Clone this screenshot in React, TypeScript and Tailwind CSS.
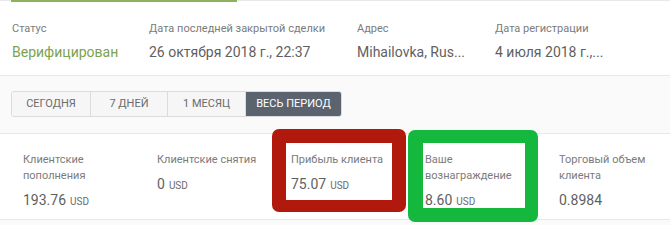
const info = [
  { label: 'Статус', value: 'Верифицирован', w: 'w-[137px]', green: true },
  { label: 'Дата последней закрытой сделки', value: '26 октября 2018 г., 22:37', w: 'w-[208px]' },
  { label: 'Адрес', value: 'Mihailovka, Rus...', w: 'w-[138px]' },
  { label: 'Дата регистрации', value: '4 июля 2018 г.,...', w: 'w-[130px]' },
];

const periods = [
  { label: 'Сегодня', w: 'w-[78px]' },
  { label: '7 дней', w: 'w-[77px]' },
  { label: '1 месяц', w: 'w-[78px]' },
  { label: 'Весь период', w: 'w-[96px]', active: true },
];

const stats = [
  { label: ['Клиентские', 'пополнения'], value: '193.76', unit: 'USD' },
  { label: ['Клиентские снятия'], value: '0', unit: 'USD' },
  { label: ['Прибыль клиента'], value: '75.07', unit: 'USD' },
  { label: ['Ваше', 'вознаграждение'], value: '8.60', unit: 'USD' },
  { label: ['Торговый объем', 'клиента'], value: '0.8984' },
];

export default function App() {
  return (
    <div className="relative h-[225px] w-[670px] overflow-hidden bg-[#fafafa] font-['Roboto','Liberation_Sans',sans-serif]">
      {/* account info */}
      <div className="relative h-[76px] border-y border-[#e8e8e8] bg-white">
        <div className="absolute -top-px left-[11px] h-[2px] w-[226px] bg-[#8db25b]" />
        <div className="flex pt-[20px] pl-3">
          {info.map(c => (
            <div key={c.label} className={`${c.w} shrink-0`}>
              <div className="text-[11px] leading-4 whitespace-nowrap text-[#7b7b7b]">{c.label}</div>
              <div
                className={`mt-[5px] text-[14px] leading-5 whitespace-nowrap ${
                  c.green ? 'text-[#7ba34f]' : 'text-[#5f5f5f]'
                }`}
              >
                {c.value}
              </div>
            </div>
          ))}
        </div>
      </div>

      {/* period switch */}
      <div className="mt-[15px] ml-[11px] flex h-[26px] w-fit overflow-hidden rounded-[3px] border border-[#dcdcdc]">
        {periods.map((p, i) => (
          <div
            key={p.label}
            className={`${p.w} flex items-center justify-center text-[11px] uppercase ${
              i > 0 ? 'border-l border-[#dcdcdc]' : ''
            } ${p.active ? 'bg-[#5b646e] text-white' : 'bg-[#f6f6f6] text-[#6b6b6b]'}`}
          >
            {p.label}
          </div>
        ))}
      </div>

      {/* stats */}
      <div className="mt-4 flex h-[87px] border-y border-[#e8e8e8] bg-white pt-[18px] pl-[23px]">
        {stats.map(s => (
          <div key={s.label.join(' ')} className="w-[134px] shrink-0">
            <div className="text-[11px] leading-4 text-[#7b7b7b]">
              {s.label.map(l => (
                <div key={l}>{l}</div>
              ))}
            </div>
            <div className="mt-[6px] text-[14px] leading-5 text-[#5f5f5f]">
              {s.value}
              {s.unit && <span className="ml-1 text-[10px] text-[#6b6b6b]">{s.unit}</span>}
            </div>
          </div>
        ))}
      </div>

      {/* annotation boxes */}
      <div className="absolute top-[129px] left-[272px] h-[83px] w-[134px] rounded-[7px] border-[14px] border-b-[12px] border-[#b2190d]" />
      <div className="absolute top-[130px] left-[408px] h-[92px] w-[130px] rounded-[7px] border-[13px] border-l-[15px] border-b-[14px] border-[#14b83c]" />
    </div>
  );
}
